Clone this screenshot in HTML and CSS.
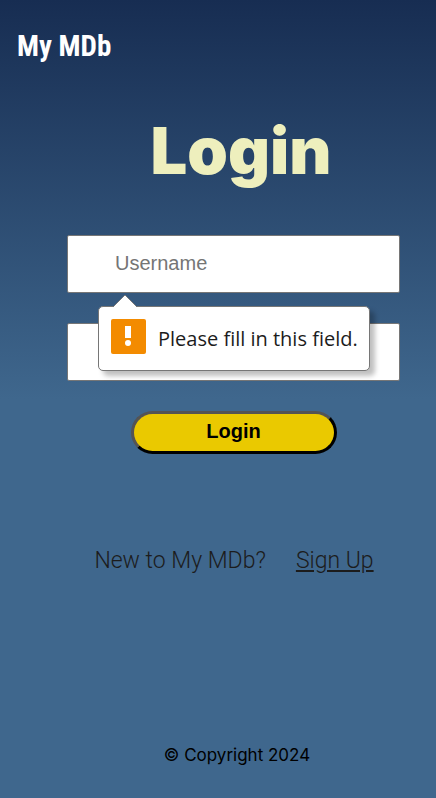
FILE: index.html
```html
<!DOCTYPE html>
<html lang="en">
<head>
<meta charset="utf-8">
<meta name="viewport" content="width=device-width, initial-scale=1">
<title>My MDb</title>
<link rel="stylesheet" href="styles.css">
</head>
<body>
<header class="site-header"><a class="brand" href="#">My MDb</a></header>
<main class="login">
  <h1 class="title">Login</h1>
  <form class="form">
    <div class="field">
      <input class="input" type="text" aria-label="Username" placeholder="Username">
      <div class="tip" role="alert">
        <svg class="tip-arrow" viewBox="0 0 24 13" aria-hidden="true"><path d="M0 13 12 1l12 12z" fill="#fff"/><path d="M0 13 12 1l12 12" fill="none" stroke="#767676"/></svg>
        <svg class="tip-icon" viewBox="0 0 35 35" aria-hidden="true"><rect width="35" height="35" rx="2" fill="#f38b00"/><path d="M14 7h6v12h-6z" fill="#fff"/><circle cx="17" cy="24" r="3" fill="#fff"/></svg>
        <span>Please fill in this field.</span>
      </div>
    </div>
    <input class="input" type="password" aria-label="Password">
    <button class="submit" type="submit">Login</button>
  </form>
  <p class="signup"><span>New to My MDb?</span><a class="signup-link" href="#">Sign Up</a></p>
</main>
<footer class="footer">© Copyright 2024</footer>
</body>
</html>
```

FILE: styles.css
```css
* { box-sizing: border-box; }
body {
  margin: 0;
  min-height: 100vh;
  display: flex;
  flex-direction: column;
  color: #1c1c1c;
  background: linear-gradient(#172d52, #3f678d 50%) #3f678d;
  font-family: "Open Sans", sans-serif;
}
.site-header { padding: 28px 17px 0; }
.brand {
  color: #fff;
  font: 700 29px/36px "Roboto Condensed", Roboto, sans-serif;
  text-decoration: none;
}
.login { flex: 1; }
.title {
  margin: 45px 0 0 46px;
  text-align: center;
  color: #eeefbd;
  font: 900 65px/84px Inter, sans-serif;
}
.form {
  display: flex;
  flex-direction: column;
  align-items: center;
  gap: 30px;
  margin: 42px 36px 0 67px;
}
.field { position: relative; width: 100%; }
.input {
  display: block;
  width: 100%;
  height: 58px;
  padding: 0 47px 2px;
  border: 1px solid #767676;
  border-radius: 2px;
  background: #fff;
  font: 20px "Liberation Sans", sans-serif;
}
.input::placeholder { color: #757575; }
.tip {
  position: absolute;
  top: 71px;
  left: 31px;
  display: flex;
  align-items: center;
  gap: 12px;
  height: 65px;
  padding: 0 11px 0 12px;
  border: 1px solid #767676;
  border-radius: 5px;
  background: #fff;
  box-shadow: 5px 5px 5px rgb(0 0 0 / 25%);
  color: #1c1c1c;
  font: 20px "Open Sans", sans-serif;
  white-space: nowrap;
}
.tip-arrow {
  position: absolute;
  top: -13px;
  left: 14px;
  width: 24px;
  height: 13px;
}
.tip-icon { width: 35px; height: 35px; margin-bottom: 4px; }
.submit {
  width: 206px;
  height: 43px;
  padding: 0 0 2px;
  border: 3px outset #000;
  border-radius: 22px;
  background: #eac900;
  color: #000;
  font: 700 20px "Liberation Sans", sans-serif;
}
.signup {
  display: flex;
  justify-content: center;
  gap: 30px;
  margin: 92px 0 0 32px;
  font: 300 23px/30px Roboto, sans-serif;
}
.signup-link { color: inherit; }
.footer {
  padding: 0 0 32px 38px;
  text-align: center;
  color: #000;
  font: 17px/22px Inter, sans-serif;
}
```
